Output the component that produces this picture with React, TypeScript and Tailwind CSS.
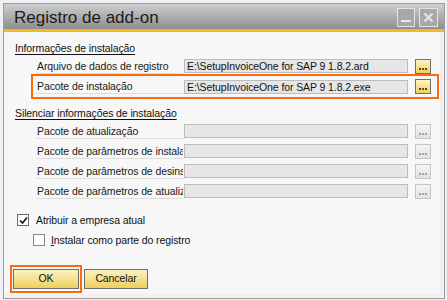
import React from "react";

const font = { fontFamily: '"Liberation Sans", Arial, sans-serif' };

function DotsButton({ active }: { active?: boolean }) {
  return (
    <div
      className={`w-[16px] h-[15px] flex items-end justify-center pb-[3px] border ${
        active
          ? "border-[#6f6f6f] bg-gradient-to-b from-[#fdf3c4] to-[#f0cf5e]"
          : "border-[#c4c4c4] bg-gradient-to-b from-[#f4f4f4] to-[#e2e2e2]"
      }`}
    >
      <div className="flex gap-[1px]">
        <span className={`w-[2px] h-[2px] ${active ? "bg-[#8a2a1a]" : "bg-[#c09090]"}`} />
        <span className={`w-[2px] h-[2px] ${active ? "bg-[#4a5a1a]" : "bg-[#a0a8c0]"}`} />
        <span className={`w-[2px] h-[2px] ${active ? "bg-[#8a2a1a]" : "bg-[#c09090]"}`} />
      </div>
    </div>
  );
}

function Row({ label, value, active }: { label: string; value?: string; active?: boolean }) {
  return (
    <div className="flex items-center h-[20px]">
      <div className="w-[147px] h-[15px] pl-[1px] border-b border-[#dedede] text-[10.5px] tracking-[-0.1px] leading-[14px] text-[#1a1a1a] whitespace-nowrap overflow-hidden">
        {label}
      </div>
      <div className="w-[224px] h-[14px] ml-[1px] border border-[#bcbcbc] bg-[#e6e6e6] text-[10.5px] tracking-[-0.1px] leading-[12px] pl-[2px] text-[#111] whitespace-nowrap overflow-hidden">
        {value}
      </div>
      <div className="ml-[7px]">
        <DotsButton active={active} />
      </div>
    </div>
  );
}

export default function App() {
  return (
    <div className="w-[447px] h-[300px] bg-[#eef1f6] pt-[3px] pl-[3px] pr-[2px] overflow-hidden" style={font}>
      <div className="w-[442px] h-[296px] border border-[#9c9c9c] flex flex-col bg-[#f0f0f0]">
        {/* Title bar */}
        <div className="h-[25px] bg-gradient-to-b from-[#cfcfcf] to-[#8e8e8e] flex items-center pl-[10px] pr-[6px]">
          <span className="text-[17px] text-[#1b1b1b] mt-[3px]">Registro de add-on</span>
          <div className="ml-auto flex gap-[4px] mt-[2px]">
            <div className="w-[18px] h-[19px] border border-[#e4e4e4] bg-[#a8a8a8] flex items-end justify-center pb-[4px]">
              <span className="w-[10px] h-[2px] bg-[#e8e8e8]" />
            </div>
            <div className="w-[19px] h-[19px] border border-[#e4e4e4] bg-[#a8a8a8] flex items-center justify-center">
              <svg width="11" height="11" viewBox="0 0 11 11">
                <path d="M1.5 1.5 L9.5 9.5 M9.5 1.5 L1.5 9.5" stroke="#e4e4e4" strokeWidth="2.4" />
              </svg>
            </div>
          </div>
        </div>
        <div className="h-[3px] bg-[#f6b91c]" />

        {/* Body */}
        <div className="flex-1 bg-[#f7f7f7] mr-[4px] mb-[4px] flex flex-col pl-[11px] text-[#111] text-[10.5px] tracking-[-0.1px]">
          <div className="mt-[9px] leading-[14px] underline underline-offset-[2px]">Informações de instalação</div>
          <div className="mt-[1px] pl-[21px]">
            <Row label="Arquivo de dados de registro" value="E:\SetupInvoiceOne for SAP 9 1.8.2.ard" active />
          </div>
          <div className="-mt-[2px] ml-[16px] w-[408px] h-[25px] border-2 border-[#f86b10] flex items-center pl-[3px]">
            <Row label="Pacote de instalação" value="E:\SetupInvoiceOne for SAP 9 1.8.2.exe" active />
          </div>

          <div className="mt-[7px] leading-[14px] underline underline-offset-[2px]">Silenciar informações de instalação</div>
          <div className="mt-[1px] pl-[21px] flex flex-col">
            <Row label="Pacote de atualização" />
            <Row label="Pacote de parâmetros de instalação" />
            <Row label="Pacote de parâmetros de desinstalação" />
            <Row label="Pacote de parâmetros de atualização" />
          </div>

          <div className="mt-[12px] flex items-center gap-[7px] pl-[2px]">
            <div className="w-[12px] h-[12px] border border-[#6a6a6a] bg-white flex items-center justify-center">
              <svg width="9" height="9" viewBox="0 0 9 9">
                <path d="M1 4.5 L3.5 7 L8 1.5" stroke="#111" strokeWidth="1.6" fill="none" />
              </svg>
            </div>
            <span className="leading-[14px]">Atribuir a empresa atual</span>
          </div>
          <div className="mt-[6px] flex items-center gap-[6px] pl-[18px]">
            <div className="w-[12px] h-[12px] border border-[#8a8a8a] bg-white" />
            <span className="leading-[14px]">
              <span className="underline">I</span>nstalar como parte do registro
            </span>
          </div>

          <div className="mt-auto mb-[1px] flex items-center">
            <div className="-ml-[5px] py-[2px] px-[1px] border-2 border-[#f86b10]">
              <button className="w-[66px] h-[20px] border border-[#6e6e6e] bg-gradient-to-b from-[#fcf1c2] to-[#f0cf5a] text-[#111]">
                OK
              </button>
            </div>
            <button className="ml-[2px] w-[64px] h-[20px] border border-[#6e6e6e] bg-gradient-to-b from-[#fcf1c2] to-[#f0cf5a] text-[#111]">
              Cancelar
            </button>
          </div>
        </div>
      </div>
    </div>
  );
}
